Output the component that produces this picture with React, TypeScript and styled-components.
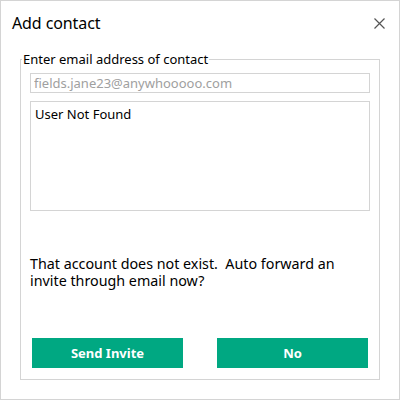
import React from "react";
import styled, { createGlobalStyle } from "styled-components";

const Global = createGlobalStyle`
  html, body { margin: 0; padding: 0; background: #ffffff; }
  * { box-sizing: border-box; }
`;

const FONT = `"Noto Sans", "Open Sans", "DejaVu Sans", sans-serif`;

const Dialog = styled.div`
  width: 400px;
  height: 400px;
  border: 1px solid #d4d4d4;
  background: #ffffff;
  font-family: ${FONT};
  color: #000000;
  display: flex;
  flex-direction: column;
`;

const Header = styled.div`
  height: 44px;
  display: flex;
  align-items: center;
  justify-content: space-between;
  padding: 0 14px 0 11px;
`;

const Title = styled.h1`
  margin: 0;
  font-size: 16px;
  font-weight: 400;
  letter-spacing: -0.1px;
`;

const CloseButton = styled.button`
  border: none;
  background: transparent;
  padding: 0;
  width: 12px;
  height: 12px;
  display: flex;
  align-items: center;
  justify-content: center;
  cursor: pointer;
`;

const Group = styled.fieldset`
  margin: 6px 19px 0 19px;
  padding: 0 9px 11px 9px;
  border: 1px solid #d4d4d4;
  height: 329px;
  min-width: 0;
`;

const Legend = styled.legend`
  font-size: 13px;
  padding: 0 1px;
  margin-left: -8px;
  line-height: 16px;
`;

const EmailInput = styled.input`
  display: block;
  width: 100%;
  height: 20px;
  margin-top: 6px;
  border: 1px solid #d4d4d4;
  padding: 0 3px;
  font-family: ${FONT};
  font-size: 13px;
  color: #000;
  outline: none;
  &::placeholder { color: #a0a0a0; }
`;

const ResultBox = styled.div`
  margin-top: 8px;
  height: 110px;
  border: 1px solid #d4d4d4;
  padding: 3px 4px;
  font-size: 13px;
  line-height: 18px;
`;

const Message = styled.p`
  margin: 44px 0 0 0;
  font-size: 14.3px;
  line-height: 17px;
  white-space: pre-wrap;
  width: 320px;
`;

const Actions = styled.div`
  margin-top: 49px;
  display: flex;
  gap: 34px;
  padding-left: 2px;
`;

const ActionButton = styled.button`
  width: 151px;
  height: 30px;
  border: none;
  background: #00a882;
  color: #ffffff;
  font-family: ${FONT};
  font-weight: 700;
  font-size: 13px;
  cursor: pointer;
`;

export default function App() {
  return (
    <>
      <Global />
      <Dialog>
        <Header>
          <Title>Add contact</Title>
          <CloseButton aria-label="Close">
            <svg width="11" height="11" viewBox="0 0 11 11">
              <path d="M0.5 0.5 L10.5 10.5 M10.5 0.5 L0.5 10.5" stroke="#555" strokeWidth="1.2" />
            </svg>
          </CloseButton>
        </Header>
        <Group>
          <Legend>Enter email address of contact</Legend>
          <EmailInput placeholder="fields.jane23@anywhooooo.com" />
          <ResultBox>User Not Found</ResultBox>
          <Message>{"That account does not exist.  Auto forward an invite through email now?"}</Message>
          <Actions>
            <ActionButton>Send Invite</ActionButton>
            <ActionButton>No</ActionButton>
          </Actions>
        </Group>
      </Dialog>
    </>
  );
}
